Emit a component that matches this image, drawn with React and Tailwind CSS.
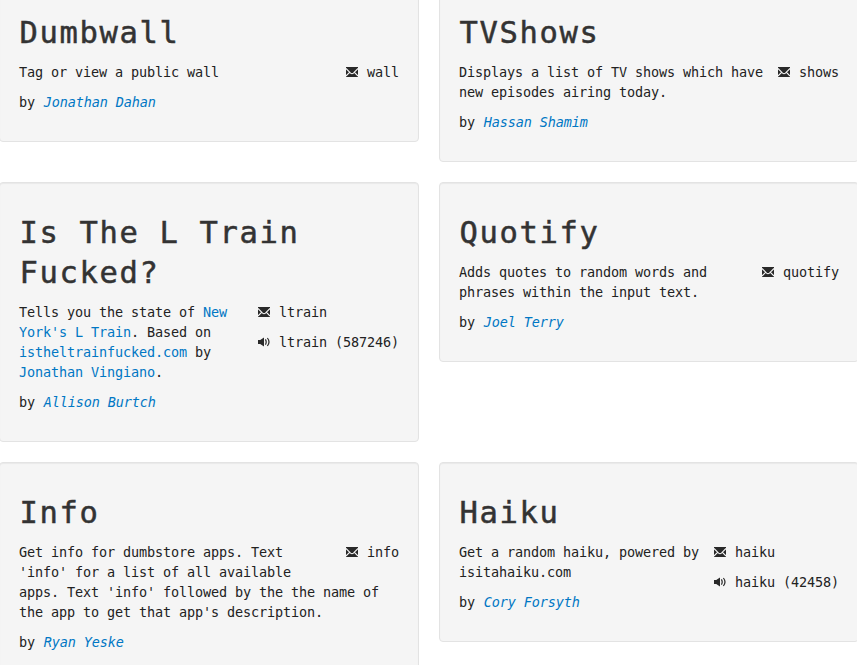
import React from "react";

function Envelope() {
  return (
    <svg viewBox="0 0 14 14" className="mt-px inline-block h-[14px] w-[14px] align-text-top" aria-hidden="true">
      <rect x="1" y="2" width="12" height="10" fill="#292929" />
      <path d="M1 3.5 L5.6 8.1 Q7 9.3 8.4 8.1 L13 3.5 M1 11 L4.8 7.2 M13 11 L9.2 7.2" stroke="#f5f5f5" strokeWidth="1.1" fill="none" />
    </svg>
  );
}

function Speaker() {
  return (
    <svg viewBox="0 0 14 14" className="mt-px inline-block h-[14px] w-[14px] align-text-top" aria-hidden="true">
      <path d="M1 5 H3.2 L7 2.5 V11.5 L3.2 9 H1 Z" fill="#292929" />
      <path d="M8.4 4.4 Q10 7 8.4 9.6 M10.4 3 Q13.6 7 10.4 11" stroke="#292929" strokeWidth="1.2" fill="none" />
    </svg>
  );
}

function Link({ children }) {
  return <a className="text-[#0077c4]">{children}</a>;
}

function Card({ title, author, text, voice, children }) {
  return (
    <section className="mb-5 rounded-[4px] border border-[#e3e3e3] bg-[#f5f5f5] p-[19px] shadow-[inset_0_1px_1px_rgba(0,0,0,0.05)]">
      <h2 className="my-[10px] pl-[0.5px] pt-px -mb-[1px] text-[30.5px] leading-[40px] tracking-[1.64px] text-[#333333] [-webkit-text-stroke:0.5px_#333333]">{title}</h2>
      <ul className="float-right mt-[10px] ml-2 whitespace-nowrap">
        <li className="mb-[10px] h-5"><Envelope /> {text}</li>
        {voice && <li className="mb-[10px] h-5"><Speaker /> {voice}</li>}
      </ul>
      <p className="mb-[10px] whitespace-nowrap pt-[10px]">{children}</p>
      <p className="mb-[10px]">by <em className="ml-[0.7px] text-[#0077c4]">{author}</em></p>
    </section>
  );
}

export default function App() {
  return (
    <main className="h-[665px] w-[857px] overflow-hidden bg-white font-['DejaVu_Sans_Mono','Liberation_Mono',monospace] text-[13.5px] leading-5 tracking-[-0.128px] text-[#222222]">
      <div className="-ml-px -mt-[18px] grid w-[860px] grid-cols-[420px_420px] items-start gap-x-5">
        <Card title="Dumbwall" author="Jonathan Dahan" text="wall">Tag or view a public wall</Card>
        <Card title="TVShows" author="Hassan Shamim" text="shows">
          Displays a list of TV shows which have<br />new episodes airing today.
        </Card>
        <Card title={<>Is The L Train<br />Fucked?</>} author="Allison Burtch" text="ltrain" voice="ltrain (587246)">
          Tells you the state of <Link>New<br />York's L Train</Link>. Based on<br />
          <Link>istheltrainfucked.com</Link> by<br /><Link>Jonathan Vingiano</Link>.
        </Card>
        <Card title="Quotify" author="Joel Terry" text="quotify">
          Adds quotes to random words and<br />phrases within the input text.
        </Card>
        <Card title="Info" author="Ryan Yeske" text="info">
          Get info for dumbstore apps. Text<br />'info' for a list of all available<br />
          apps. Text 'info' followed by the the name of<br />the app to get that app's description.
        </Card>
        <Card title="Haiku" author="Cory Forsyth" text="haiku" voice="haiku (42458)">
          Get a random haiku, powered by<br />isitahaiku.com
        </Card>
      </div>
    </main>
  );
}
